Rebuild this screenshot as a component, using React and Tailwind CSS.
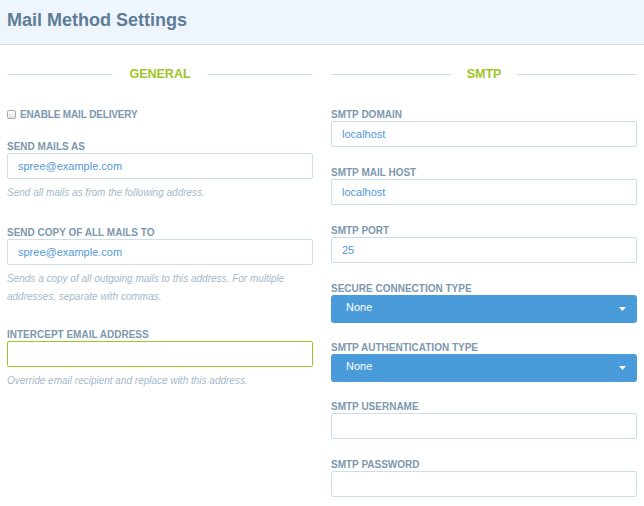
import React from "react";

const font = { fontFamily: '"Liberation Sans", Arial, Helvetica, sans-serif' };

const SectionTitle = ({ children }) => (
  <div className="flex items-center h-[20px]">
    <div className="flex-1 h-px bg-[#d3e1ec]" />
    <span className="px-4 text-[12.5px] font-bold text-[#9bc626] leading-none">{children}</span>
    <div className="flex-1 h-px bg-[#d3e1ec]" />
  </div>
);

const Label = ({ children }) => (
  <div className="h-[14px] leading-[15px] text-[10px] font-bold uppercase text-[#7d98ae]">{children}</div>
);

const TextInput = ({ value = "", green = false }) => (
  <div
    className={`h-[26px] flex items-center px-[10px] rounded-[2px] border bg-white text-[11px] text-[#5499d9] ${
      green ? "border-[#9bc626]" : "border-[#cbdff1]"
    }`}
  >
    {value}
  </div>
);

const Select = ({ value }) => (
  <div className="h-[28px] flex items-center justify-between pl-[15px] pr-[11px] rounded-[3px] bg-[#4a9bd9] text-[11px] text-white">
    <span className="-mt-[3px]">{value}</span>
    <svg width="7" height="4" viewBox="0 0 7 4">
      <path d="M0 0h7L3.5 4z" fill="#fff" />
    </svg>
  </div>
);

const Help = ({ children }) => (
  <p className="mt-[5px] text-[10px] italic leading-[18px] text-[#a5b9ca]">{children}</p>
);

export default function App() {
  return (
    <div className="w-[644px] h-[506px] bg-white overflow-hidden" style={font}>
      {/* header */}
      <div className="h-[45px] bg-[#eef5fd] border-b border-[#c9ddf0] px-[7px] flex items-center">
        <h1 className="text-[18px] font-bold text-[#5d7d98] -mt-[3px]">Mail Method Settings</h1>
      </div>

      <div className="grid grid-cols-2 gap-x-[18px] px-[7px] pt-[19px]">
        {/* General */}
        <div>
          <SectionTitle>GENERAL</SectionTitle>
          <div className="mt-[23px] h-[14px] flex items-center gap-[4px]">
            <div className="w-[9px] h-[9px] rounded-[2px] border border-[#a9a9a9] bg-gradient-to-b from-white to-[#e4e4e4]" />
            <span className="text-[10px] font-bold text-[#7d98ae] mt-px tracking-[-0.15px]">ENABLE MAIL DELIVERY</span>
          </div>

          <div className="mt-[18px]">
            <Label>Send mails as</Label>
            <TextInput value="spree@example.com" />
            <Help>Send all mails as from the following address.</Help>
          </div>

          <div className="mt-[23px]">
            <Label>Send copy of all mails to</Label>
            <TextInput value="spree@example.com" />
            <Help>
              Sends a copy of all outgoing mails to this address. For multiple
              <br />
              addresses, separate with commas.
            </Help>
          </div>

          <div className="mt-[21px]">
            <Label>Intercept email address</Label>
            <TextInput green />
            <Help>Override email recipient and replace with this address.</Help>
          </div>
        </div>

        {/* SMTP */}
        <div>
          <SectionTitle>SMTP</SectionTitle>
          <div className="mt-[23px] flex flex-col">
            <div className="mb-[18px]">
              <Label>SMTP Domain</Label>
              <TextInput value="localhost" />
            </div>
            <div className="mb-[18px]">
              <Label>SMTP Mail Host</Label>
              <TextInput value="localhost" />
            </div>
            <div className="mb-[18px]">
              <Label>SMTP Port</Label>
              <TextInput value="25" />
            </div>
            <div className="mb-[17px]">
              <Label>Secure Connection Type</Label>
              <Select value="None" />
            </div>
            <div className="mb-[17px]">
              <Label>SMTP Authentication Type</Label>
              <Select value="None" />
            </div>
            <div className="mb-[18px]">
              <Label>SMTP Username</Label>
              <TextInput />
            </div>
            <div>
              <Label>SMTP Password</Label>
              <TextInput />
            </div>
          </div>
        </div>
      </div>
    </div>
  );
}
